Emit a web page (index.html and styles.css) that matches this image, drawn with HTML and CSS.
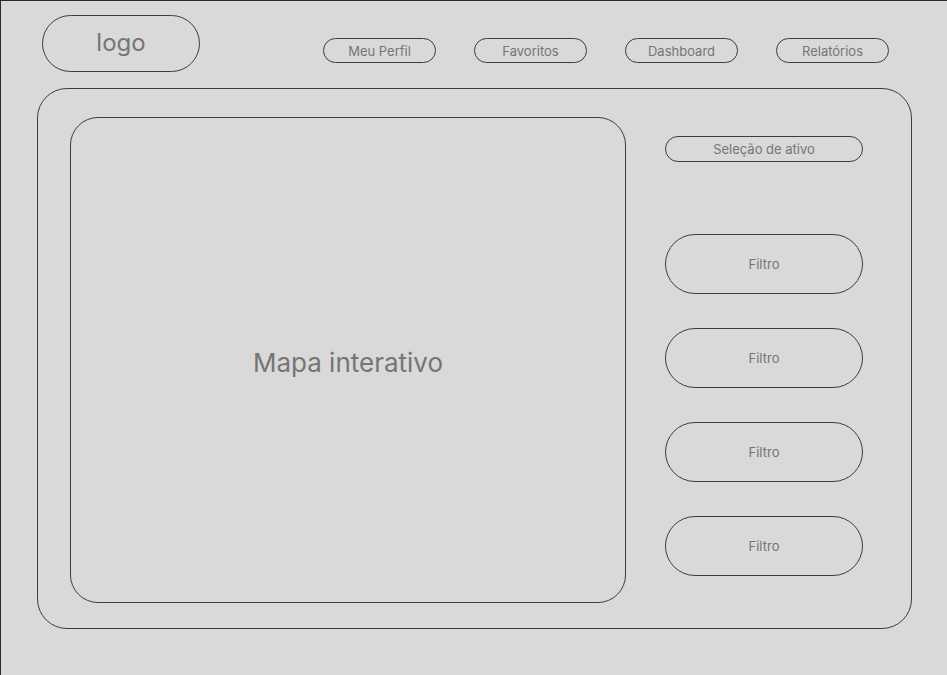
FILE: index.html
```html
<!DOCTYPE html>
<html lang="pt">

<head>
    <meta charset="UTF-8">
    <meta name="viewport" content="width=device-width, initial-scale=1.0">
    <title>Mapa interativo</title>
    <link rel="stylesheet" href="styles.css">
</head>

<body>
    <div class="page">
        <!-- topo -->
        <header class="header">
            <div class="logo">logo</div>
            <nav class="nav">
                <a href="#" class="nav-item">Meu Perfil</a>
                <a href="#" class="nav-item">Favoritos</a>
                <a href="#" class="nav-item">Dashboard</a>
                <a href="#" class="nav-item">Relatórios</a>
            </nav>
        </header>

        <!-- conteudo -->
        <main class="main">
            <div class="map">Mapa interativo</div>
            <aside class="side">
                <div class="select">Seleção de ativo</div>
                <ul class="filters">
                    <li class="filter">Filtro</li>
                    <li class="filter">Filtro</li>
                    <li class="filter">Filtro</li>
                    <li class="filter">Filtro</li>
                </ul>
            </aside>
        </main>
    </div>
</body>

</html>
```

FILE: styles.css
```css
* {
    margin: 0;
    padding: 0;
    box-sizing: border-box;
}

ul {
    list-style: none;
}

a {
    text-decoration: none;
}

body {
    background-color: #d9d9d9;
    font-family: Inter, "Liberation Sans", sans-serif;
    color: #757575;
}

.page {
    height: 675px;
    border-top: 1px solid #2a2a2a;
    border-left: 1px solid #2a2a2a;
}

.header {
    display: flex;
    align-items: flex-start;
    padding: 14px 58px 0 41px;
}

.logo {
    width: 158px;
    height: 57px;
    border: 1px solid #3d3d3d;
    border-radius: 29px;
    display: flex;
    align-items: center;
    justify-content: center;
    font-size: 24px;
    padding-bottom: 2px;
}

.nav {
    margin-left: auto;
    margin-top: 23px;
    display: flex;
    gap: 38px;
}

.nav-item {
    width: 113px;
    height: 25px;
    border: 1px solid #3d3d3d;
    border-radius: 13px;
    display: flex;
    align-items: center;
    justify-content: center;
    font-size: 13px;
    color: #757575;
}

.main {
    width: 875px;
    height: 541px;
    margin: 16px 0 0 36px;
    border: 1px solid #3d3d3d;
    border-radius: 30px;
    display: flex;
    padding: 28px 0 0 32px;
}

.map {
    width: 556px;
    height: 486px;
    border: 1px solid #3d3d3d;
    border-radius: 28px;
    display: flex;
    align-items: center;
    justify-content: center;
    font-size: 26px;
    padding-top: 4px;
}

.side {
    margin-left: 39px;
    width: 198px;
    padding-top: 19px;
}

.select {
    height: 26px;
    border: 1px solid #3d3d3d;
    border-radius: 13px;
    display: flex;
    align-items: center;
    justify-content: center;
    font-size: 13px;
}

.filters {
    margin-top: 72px;
    display: flex;
    flex-direction: column;
    gap: 34px;
}

.filter {
    height: 60px;
    border: 1px solid #3d3d3d;
    border-radius: 30px;
    display: flex;
    align-items: center;
    justify-content: center;
    font-size: 13px;
}
```
